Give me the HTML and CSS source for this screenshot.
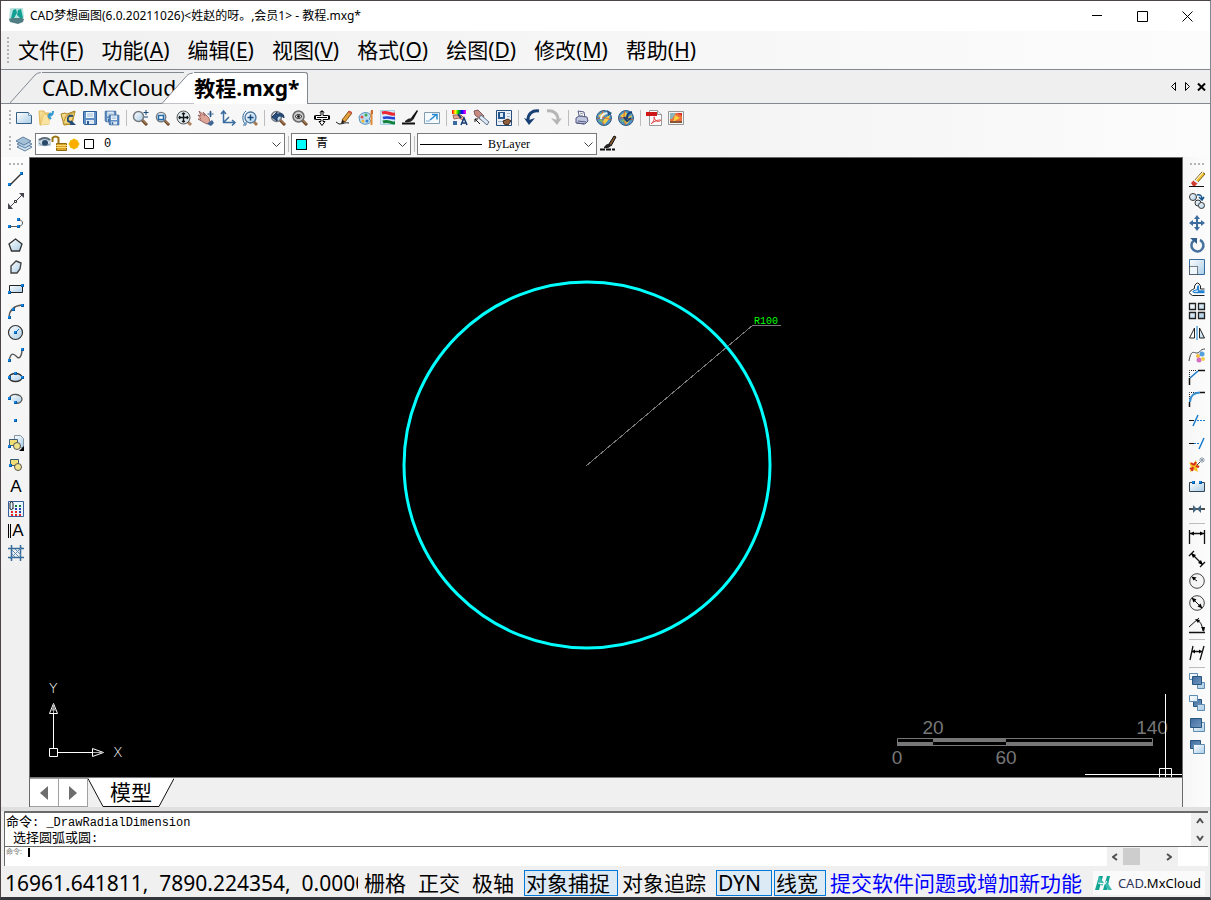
FILE: index.html
```html
<!DOCTYPE html>
<html lang="zh-CN">
<head>
<meta charset="utf-8">
<title>CAD梦想画图</title>
<link rel="stylesheet" href="styles.css">
</head>
<body>
<svg class="defs" aria-hidden="true">
  <defs>
    <linearGradient id="sky" x1="0" y1="0" x2="1" y2="1"><stop offset="0" stop-color="#fff"/><stop offset="1" stop-color="#a9cce6"/></linearGradient>
    <linearGradient id="gold" x1="0" y1="0" x2="1" y2="1"><stop offset="0" stop-color="#fbe9a6"/><stop offset="1" stop-color="#dca83c"/></linearGradient>
    <linearGradient id="deep" x1="0" y1="0" x2="1" y2="1"><stop offset="0" stop-color="#3f6c9f"/><stop offset="1" stop-color="#7197c0"/></linearGradient>
    <linearGradient id="spectrum"><stop offset="0" stop-color="#f00"/><stop offset=".25" stop-color="#ff0"/><stop offset=".45" stop-color="#0c0"/><stop offset=".7" stop-color="#00f"/><stop offset="1" stop-color="#f0f"/></linearGradient>
    <symbol id="lens" viewBox="0 0 16 16"><path d="M10 10l5 5" stroke="#6b4426" stroke-width="3"/><path d="M10.500 10l4 4" stroke="#d0a070"/><circle cx="6.500" cy="6.500" r="5" fill="url(#sky)" stroke="#747a80" stroke-width="1.500"/></symbol>
    <symbol id="disk" viewBox="0 0 16 16"><path d="M1.500 1.500h13v13h-12l-1-1z" fill="#5f8fc4" stroke="#2f5f98"/><path d="M4 2h8v6H4z" fill="#edf5fb"/><path d="M5 4h6M5 6h6" stroke="#9fbdd8"/><path d="M4 10h8v4H4z" fill="#dce8f2"/><path d="M5 11h2v3H5z" fill="#2f5f98"/></symbol>
    <symbol id="globe" viewBox="0 0 16 16"><circle cx="8" cy="8" r="7.500" fill="#4a91c4" stroke="#315f85"/><path d="M2 6l5-4 3 2-4 4zM9 14l4-5 1-4-5 3-3 5z" fill="#f2cc43"/><path d="M1 9c5-3 9-1 14 1M7 1c-2 5-1 10 1 14" fill="none" stroke="#d65b31"/><path d="M2 11l4-2 1 3" fill="#85b85a"/></symbol>
    <symbol id="dot" viewBox="0 0 3 3"><path d="M0 0h3v3H0z" fill="#005ba8"/><path d="M0 0h2v2H0z" fill="#1686e0"/></symbol>
  </defs>
</svg>

<div class="window">
  <header class="titlebar">
    <svg class="icon app-icon" viewBox="0 0 16 16"><path d="M1 0h13l1 9-2 3H0z" fill="#b8e3de"/><path d="M0 11l3-1h10l2 1-1 3-5 2-8-2z" fill="#4f7d83"/><path d="M4 2l3-1 1 4-3 5H2zM9 2l3-1 2 9h-3L8 7z" fill="#13a094"/></svg>
    <h1 class="title">CAD梦想画图(6.0.20211026)&lt;姓赵的呀。,会员1&gt; - 教程.mxg*</h1>
    <div class="window-buttons">
      <button class="window-button" aria-label="最小化"><svg viewBox="0 0 11 11"><path d="M0 4.500h10"/></svg></button>
      <button class="window-button" aria-label="最大化"><svg viewBox="0 0 11 11"><path d="M.5.500h10v10H.5z"/></svg></button>
      <button class="window-button" aria-label="关闭"><svg viewBox="0 0 11 11"><path d="M.5.500l10 10m0-10l-10 10"/></svg></button>
    </div>
  </header>

  <nav class="menubar">
    <span class="grip grip-tall"></span>
    <button class="menu">文件(<u>F</u>)</button>
    <button class="menu">功能(<u>A</u>)</button>
    <button class="menu">编辑(<u>E</u>)</button>
    <button class="menu">视图(<u>V</u>)</button>
    <button class="menu">格式(<u>O</u>)</button>
    <button class="menu">绘图(<u>D</u>)</button>
    <button class="menu">修改(<u>M</u>)</button>
    <button class="menu">帮助(<u>H</u>)</button>
  </nav>

  <div class="doc-tabs">
    <button class="doc-tab"><svg class="slope" viewBox="0 0 32 31"><path d="M0 31L25 3Q27 .5 32 .5V31z"/></svg><span class="doc-label">CAD.MxCloud</span></button>
    <button class="doc-tab active"><svg class="slope" viewBox="0 0 32 31"><path d="M0 31L25 3Q27 .5 32 .5V31z"/></svg><span class="doc-label">教程.mxg*</span></button>
    <div class="doc-nav">
      <button aria-label="上一个"><svg viewBox="0 0 9 9"><path d="M6.500.5v8l-4-4z"/></svg></button>
      <button aria-label="下一个"><svg viewBox="0 0 9 9"><path d="M2.500.5v8l4-4z"/></svg></button>
      <button aria-label="关闭图纸"><svg viewBox="0 0 9 9"><path d="M1 1.500l7 7m0-7l-7 7" stroke-width="2"/></svg></button>
    </div>
  </div>

  <div class="toolbar">
    <span class="grip"></span>
    <button class="tool" aria-label="新建"><svg viewBox="0 0 16 16"><path d="M.5 2.500h12l3 3v8H.5z" fill="url(#sky)" stroke="#355f87"/><path d="M12.500 2.500v3h3" fill="#fff" stroke="#6c9abc"/></svg></button>
    <button class="tool" aria-label="打开"><svg viewBox="0 0 16 16"><path d="M1 1h5l1 2h4v11l-9 1z" fill="url(#gold)" stroke="#dfb75a"/><path d="M3 15L6 5h3l3 9z" fill="#f9e3a0"/><path d="M15 1c0 4-2 5-5 5m0 0l3-3m-3 3l3 3" fill="none" stroke="#3399d2" stroke-width="2"/></svg></button>
    <button class="tool" aria-label="打开云图"><svg viewBox="0 0 16 16"><path d="M1 4l4-1 2 1 8-3-3 13-8 1z" fill="url(#gold)" stroke="#a6801d"/><path d="M3 14L6 6l9-4-4 12z" fill="#f5d779" stroke="#b99436"/><path d="M13 6c-4-1-6 1-5 5l4 2" fill="none" stroke="#254c77" stroke-width="2"/><path d="M11 10l5 5h-6z" fill="#254c77"/></svg></button>
    <button class="tool" aria-label="保存"><svg viewBox="0 0 16 16"><use href="#disk"/></svg></button>
    <button class="tool" aria-label="另存为"><svg viewBox="0 0 16 16"><use href="#disk" width="13" height="13"/><use href="#disk" x="4" y="4" width="12" height="12"/></svg></button>
    <span class="sep"></span>
    <button class="tool" aria-label="实时缩放"><svg viewBox="0 0 16 16"><use href="#lens" width="16" height="16"/><path d="M14 0v5M11.500 2.500h5M12 7h4" stroke="#164779"/></svg></button>
    <button class="tool" aria-label="窗口缩放"><svg viewBox="0 0 16 16"><use href="#lens" x="1" y="1" width="15" height="15"/><path d="M4.500 5.500h5v4h-5z" fill="#fff" stroke="#236ba8" stroke-width="1.500"/></svg></button>
    <button class="tool" aria-label="范围缩放"><svg viewBox="0 0 16 16"><path d="M12 12l3 3" stroke="#b08460" stroke-width="3"/><circle cx="7.500" cy="7.500" r="6.500" fill="#dce8ee" stroke="#555"/><path d="M7.500 3v9M3 7.500h9M6 4l1.500-1L9 4M6 11l1.500 1L9 11M4 6L3 7.500 4 9m7-3l1 1.500L11 9" fill="none" stroke="#111" stroke-width="1.300"/></svg></button>
    <button class="tool" aria-label="平移"><svg viewBox="0 0 16 16"><path d="M1 1l6 5-2-4 6 6 1 4-3 2-4-2-5-3 3 0-3-4 3 1z" fill="#dda498" stroke="#9f6a65"/><path d="M9 14l5-4 2 3-3 3z" fill="#3f6695"/><path d="M12.500 1v6M9.500 4h6" stroke="#2b5789"/><path d="M11 2.500l1.500-2 1.500 2M11 5.500l1.500 2 1.500-2" fill="#2b5789"/></svg></button>
    <button class="tool" aria-label="坐标系"><svg viewBox="0 0 16 16"><path d="M3.500 2v10.500H14M1 4l2.500-3L6 4M12 10l3 2.500-3 3M3.500 12.500L9 7" fill="none" stroke="#3a6c9f" stroke-width="1.500"/></svg></button>
    <button class="tool" aria-label="动态缩放"><svg viewBox="0 0 16 16"><path d="M4 1C0 4 0 10 3 14" fill="none" stroke="#306aa0"/><path d="M12 12l3 3" stroke="#a87a50" stroke-width="3"/><circle cx="8.500" cy="7.500" r="5.500" fill="url(#sky)" stroke="#48749c" stroke-width="1.300"/><path d="M8.500 4.500v6M5.500 7.500h6" stroke="#164d80" stroke-width="1.500"/><path d="M4 12v3H1" fill="none" stroke="#306aa0"/></svg></button>
    <span class="sep"></span>
    <button class="tool" aria-label="缩放上一个"><svg viewBox="0 0 16 16"><use href="#lens" width="16" height="16"/><path d="M14 8c0-5-4-6-7-3V2L2 7l5 4V8c2-3 5-2 7 0" fill="#294e7c" stroke="#193761"/></svg></button>
    <button class="tool" aria-label="放大对象"><svg viewBox="0 0 16 16"><use href="#lens" width="16" height="16"/><circle cx="6.500" cy="6.500" r="5.500" fill="#ccc" stroke="#6b6b6b" stroke-width="1.500"/><path d="M3 6.500q3.500-4 7 0-3.500 4-7 0" fill="#eee" stroke="#222"/><circle cx="6.500" cy="6.500" r="1.300"/></svg></button>
    <button class="tool" aria-label="移动视图"><svg viewBox="0 0 16 16"><path d="M7 1.500h2v4h5.500v4H9v2h2l-3 4-3-4h2v-2H1.500v-4H7zM.5 5.500v4M15.500 5.500v4" fill="#fff" stroke="#000"/><path d="M6 2.500l2-2 2 2M3 7.500h10" fill="none" stroke="#000"/></svg></button>
    <button class="tool" aria-label="草图"><svg viewBox="0 0 16 16"><path d="M6 10L13 1l3 2-7 9z" fill="#e4a13a" stroke="#825017"/><path d="M12 2l3 2 1-2-2-1z" fill="#d9544d"/><path d="M6 10l3 2-4 2z" fill="#201c16"/><path d="M0 12l3 2c5 0 6-2 10-1" fill="none" stroke="#222"/></svg></button>
    <button class="tool" aria-label="颜色"><svg viewBox="0 0 16 16"><path d="M1 7c1-4 7-6 11-3l1 2-2 3 2 2c-1 3-7 5-11 1z" fill="#b9dcf1" stroke="#5994bd"/><circle cx="4" cy="7" r="1.500" fill="#e64b4b"/><circle cx="8" cy="5" r="1.500" fill="#3da84a"/><circle cx="5" cy="11" r="1.500" fill="#f4b430"/><circle cx="9" cy="11" r="1.500" fill="#3481cf"/><path d="M13.500 1v14" stroke="#e28a36" stroke-width="2"/><path d="M13 0h2v4h-2z" fill="#c66e31"/></svg></button>
    <button class="tool" aria-label="图层属性"><svg viewBox="0 0 16 16"><path d="M.5.500h14v14H.5z" fill="#d8edf8" stroke="#a9cfe6"/><path d="M2 3c6-2 7 2 13 1" fill="none" stroke="#ed2835" stroke-width="3"/><path d="M3 8c5-2 7 1 12 0" fill="none" stroke="#243fd4" stroke-width="2.500"/><path d="M3 12c5-2 7 1 12 1" fill="none" stroke="#10823c" stroke-width="3"/></svg></button>
    <button class="tool" aria-label="格式刷"><svg viewBox="0 0 16 16"><path d="M9 8l6-8 1 1-5 9z" fill="#111"/><path d="M3 11q3-3 7-3l1 2q-3 3-8 2z" fill="#222"/><path d="M0 13.500h13" stroke="#111" stroke-width="2"/></svg></button>
    <button class="tool" aria-label="全屏"><svg viewBox="0 0 16 16"><path d="M.5 2.500h15v11H.5z" fill="#f4fafe" stroke="#829db0"/><path d="M6 10l6-5M8 4.500h5v5" fill="none" stroke="#278ad0" stroke-width="1.500"/><path d="M2 10h4v2H2z" fill="#b6d3e5"/></svg></button>
    <span class="sep"></span>
    <button class="tool" aria-label="文字样式"><svg viewBox="0 0 16 16"><path d="M0 0h14v4H0z" fill="url(#spectrum)"/><path d="M1 5l8 0 4 4-2 1-4-2-5 1z" fill="#e4ab96" stroke="#9b6358"/><path d="M1 11h4v4H1z" fill="#3a6ba2"/><path d="M6 4l3 4" stroke="#18396b" stroke-width="2"/><path d="M9 15l3-7 3 7m-5-2h4" fill="none" stroke="#173c71" stroke-width="1.500"/></svg></button>
    <button class="tool" aria-label="选择"><svg viewBox="0 0 16 16"><path d="M0 1l4-1 6 6-3 4-6-5z" fill="#c88a80" stroke="#7d5958"/><path d="M7 5l8 7-2 3-8-7z" fill="#dce8f2" stroke="#61738a"/><path d="M1 9l5 5M1 12V9h3" fill="none" stroke="#111"/></svg></button>
    <button class="tool" aria-label="块编辑"><svg viewBox="0 0 16 16"><path d="M.5.500h15v15H.5z" fill="#e9eff4" stroke="#264f7e"/><path d="M2 2h7v7H2z" fill="#24568d"/><path d="M4 3h3v4H4z" fill="#d6e7f5"/><path d="M11 3h3v1h-3zm0 3h3v1h-3zM2 11h7v1H2z" fill="#9bb7d0"/><path d="M7 11l5-2 3 2-3 4-4-1z" fill="#91613d" stroke="#402617"/></svg></button>
    <span class="sep"></span>
    <button class="tool" aria-label="撤销"><svg viewBox="0 0 16 16"><path d="M15 1C8 0 4 4 4 10" fill="none" stroke="#173f73" stroke-width="3"/><path d="M0 8l5 7 6-7-6 2z" fill="#173f73"/></svg></button>
    <button class="tool" aria-label="重做"><svg viewBox="0 0 16 16"><path d="M1 1c7-1 11 3 11 9" fill="none" stroke="#b5b5b5" stroke-width="3"/><path d="M16 8l-5 7-6-7 6 2z" fill="#b5b5b5"/></svg></button>
    <span class="sep"></span>
    <button class="tool" aria-label="打印"><svg viewBox="0 0 16 16"><path d="M4 1l6 1 1 6-5 1z" fill="#fff" stroke="#525880"/><path d="M2 8l3-2 8 1 1 4-3 3-9-1z" fill="#bfc6dd" stroke="#525880"/><path d="M4 11l8 1M3 13l7 1" stroke="#525880"/><path d="M6 3l3 1M6 5l3 1" stroke="#9298ae"/></svg></button>
    <button class="tool" aria-label="网络上传"><svg viewBox="0 0 16 16"><use href="#globe" width="16" height="16"/><path d="M5 9c0-5 3-6 8-6" fill="none" stroke="#e9f7ff" stroke-width="2"/><path d="M11 0l5 3-4 3z" fill="#245788"/></svg></button>
    <button class="tool" aria-label="网络下载"><svg viewBox="0 0 16 16"><use href="#globe" width="16" height="16"/><path d="M14 2C9 3 9 6 9 9m-3-2l3 4 4-3" fill="none" stroke="#163e72" stroke-width="2"/></svg></button>
    <span class="sep"></span>
    <button class="tool" aria-label="输出PDF"><svg viewBox="0 0 16 16"><path d="M3.500.5h8l4 4v11h-12z" fill="#fff" stroke="#999"/><path d="M11.500.5v4h4" fill="#eee" stroke="#999"/><path d="M0 2h11v4H0z" fill="#cf1717"/><path d="M5 14c4-4 4-8 3-7s3 6 6 4-4-1-8 2" fill="none" stroke="#e33b3b"/></svg></button>
    <button class="tool" aria-label="输出图片"><svg viewBox="0 0 16 16"><path d="M.5 1.500h15v13H.5z" fill="#f5f5f5" stroke="#969696"/><path d="M2 3h12v10H2z" fill="#ed6d3b"/><path d="M2 3h6L4 9H2z" fill="#89b5bd"/><path d="M7 5l5 3-7 4z" fill="#f9cf40"/><path d="M9 3h5v3z" fill="#da352d"/><path d="M2 11h12v2H2z" fill="#875538"/></svg></button>
  </div>

  <div class="toolbar properties">
    <span class="grip"></span>
    <button class="tool" aria-label="图层"><svg viewBox="0 0 16 16"><path d="M1 11l7-4 8 4-7 4z" fill="#d3e5f2" stroke="#5d7fa0"/><path d="M1 8l7-4 8 4-7 4z" fill="#b7d1e6" stroke="#5d7fa0"/><path d="M0 5l7-4 8 4-7 4z" fill="#a4c1d8" stroke="#5d7fa0"/></svg></button>
    <div class="picker picker-layer">
      <select aria-label="当前图层"><option>0</option></select>
      <svg class="picker-icons" viewBox="0 0 60 18"><path d="M0 4q7-4 13 0v7H0z" fill="#cbdbe6"/><path d="M1 5q6-4 11 0" fill="none" stroke="#5d6b78" stroke-width="2"/><circle cx="7" cy="8" r="3" fill="#274a68"/><path d="M1 8q5 5 11 1" fill="none" stroke="#758b9d"/><path d="M14.500 7V3q3-3 6 0v6" fill="none" stroke="#9a7411" stroke-width="2"/><path d="M18.500 8.500h10v7h-10z" fill="#dca324" stroke="#8f6914"/><path d="M18 10.500h11M18 12.500h11" stroke="#f6d66e"/><path d="M36 3v12M30 9h12M32 5l8 8m0-8l-8 8" stroke="#f7d45a"/><circle cx="36" cy="9" r="4.500" fill="#ffae00" stroke="#eac000"/><path d="M46.500 4.500h9v9h-9z" fill="#fff" stroke="#000"/></svg>
      <svg class="chevron" viewBox="0 0 9 6"><path d="M.5.500l4 4 4-4"/></svg>
    </div>
    <span class="sep"></span>
    <div class="picker picker-color">
      <select aria-label="颜色"><option>青</option></select>
      <span class="swatch"></span>
      <svg class="chevron" viewBox="0 0 9 6"><path d="M.5.500l4 4 4-4"/></svg>
    </div>
    <span class="sep"></span>
    <div class="picker picker-line">
      <select aria-label="线型"><option>ByLayer</option></select>
      <span class="line-sample"></span>
      <svg class="chevron" viewBox="0 0 9 6"><path d="M.5.500l4 4 4-4"/></svg>
    </div>
    <button class="tool" aria-label="线型管理"><svg viewBox="0 0 16 16"><path d="M9 8l5-8 2 1-5 9z" fill="#84592e" stroke="#111"/><path d="M4 11q3-4 6-3l1 2q-3 3-7 2z" fill="#222"/><path d="M0 13.500h15" stroke="#111" stroke-width="2" stroke-dasharray="5 1"/></svg></button>
  </div>

  <main class="workspace">
    <div class="side side-left">
      <span class="grip grip-flat"></span>
      <button class="tool" aria-label="直线"><svg viewBox="0 0 16 16"><path d="M2 14L14 2" stroke="#333" stroke-width="1.500"/><use href="#dot" x="0" y="12" width="3" height="3"/><use href="#dot" x="12" y="1" width="3" height="3"/></svg></button>
      <button class="tool" aria-label="构造线"><svg viewBox="0 0 16 16"><path d="M1 15L15 1" fill="none" stroke="#454550"/><path d="M0 10v6h5zM16 5V0h-5z" fill="#454550"/><path d="M6.500 7.500h2v2h-2z" fill="#fff" stroke="#333"/></svg></button>
      <button class="tool" aria-label="多段线"><svg viewBox="0 0 16 16"><path d="M1 11.500h9c6 0 6-7 0-7" fill="none" stroke="#555"/><use href="#dot" x="0" y="10" width="3" height="3"/><use href="#dot" x="9" y="10" width="3" height="3"/><use href="#dot" x="9" y="3" width="3" height="3"/></svg></button>
      <button class="tool" aria-label="正多边形"><svg viewBox="0 0 16 16"><path d="M7.500 2l6.500 5-2.500 7h-8L1 7z" fill="url(#sky)" stroke="#333" stroke-width="1.300"/></svg></button>
      <button class="tool" aria-label="多边形"><svg viewBox="0 0 16 16"><path d="M8 2l5 2-1 6-3 4H3V7z" fill="url(#sky)" stroke="#444" stroke-width="1.400"/></svg></button>
      <button class="tool" aria-label="矩形"><svg viewBox="0 0 16 16"><path d="M1.500 4.500h13v7h-13z" fill="url(#sky)" stroke="#222"/><use href="#dot" x="0" y="10" width="3" height="3"/><use href="#dot" x="13" y="3" width="3" height="3"/></svg></button>
      <button class="tool" aria-label="圆弧"><svg viewBox="0 0 16 16"><path d="M1 14Q2 3 14 2" fill="none" stroke="#555" stroke-width="1.400"/><use href="#dot" x="0" y="13" width="3" height="3"/><use href="#dot" x="4" y="5" width="3" height="3"/><use href="#dot" x="13" y="1" width="3" height="3"/></svg></button>
      <button class="tool" aria-label="圆"><svg viewBox="0 0 16 16"><circle cx="7.500" cy="7.500" r="7" fill="url(#sky)" stroke="#333" stroke-width="1.200"/><path d="M7 8l4-4" stroke="#0874c9"/><use href="#dot" x="6" y="6" width="3" height="3"/></svg></button>
      <button class="tool" aria-label="样条曲线"><svg viewBox="0 0 16 16"><path d="M1 14C3 3 7 8 9 10s5 0 5-8" fill="none" stroke="#555" stroke-width="1.400"/><use href="#dot" x="0" y="12" width="3" height="3"/><use href="#dot" x="13" y="1" width="3" height="3"/></svg></button>
      <button class="tool" aria-label="椭圆"><svg viewBox="0 0 16 16"><ellipse cx="7.500" cy="8.500" rx="6.500" ry="4" fill="url(#sky)" stroke="#333" stroke-width="1.300"/><use href="#dot" x="0" y="7" width="3" height="3"/><use href="#dot" x="6" y="3" width="3" height="3"/><use href="#dot" x="13" y="7" width="3" height="3"/></svg></button>
      <button class="tool" aria-label="椭圆弧"><svg viewBox="0 0 16 16"><path d="M1 8c2-7 13-5 13 0 0 3-3 5-7 4" fill="url(#sky)" stroke="#555" stroke-width="1.300"/><use href="#dot" x="0" y="6" width="3" height="3"/><use href="#dot" x="6" y="10" width="3" height="3"/></svg></button>
      <button class="tool" aria-label="点"><svg viewBox="0 0 16 16"><use href="#dot" x="6" y="6" width="3" height="3"/></svg></button>
      <button class="tool" aria-label="插入块"><svg viewBox="0 0 16 16"><path d="M6.500.5h6l3 3v9h-9z" fill="url(#sky)" stroke="#8195a5"/><path d="M1.500 4.500h8v6h-8z" fill="#f1df75" stroke="#415e78"/><circle cx="9" cy="11" r="3.500" fill="#eee28b" stroke="#555"/><use href="#dot" x="0" y="10" width="3" height="3"/><path d="M16 11v5h-5z"/></svg></button>
      <button class="tool" aria-label="创建块"><svg viewBox="0 0 16 16"><path d="M2.500 2.500h8v6h-8z" fill="#f1df75" stroke="#315977"/><circle cx="10" cy="10" r="3.500" fill="#eee28b" stroke="#555"/><use href="#dot" x="1" y="7" width="3" height="3"/></svg></button>
      <button class="tool letter" aria-label="单行文字">A</button>
      <button class="tool" aria-label="填充"><svg viewBox="0 0 16 16"><path d="M.5.500h15v15H.5z" fill="#e9f6ff" stroke="#385f9b"/><path d="M2 8V2q2-3 3 0v6M2 8q2 2 3-1" fill="none" stroke="#222"/><path d="M7 5h2m2 0h2" stroke="#157a3d" stroke-width="2"/><path d="M7 8h2m2 0h2M11 11h2" stroke="#263ea7" stroke-width="2"/><path d="M3 11h2m2 0h2M3 14h2m2 0h2m2 0h2" stroke="#e22" stroke-width="2"/></svg></button>
      <button class="tool letter" aria-label="多行文字"><span class="barred">A</span></button>
      <button class="tool" aria-label="图案填充"><svg viewBox="0 0 16 16"><path d="M0 3.500h16M0 12.500h16M3.500 0v16M12.500 0v16" stroke="#376b9c" stroke-width="1.500"/><path d="M4 5l7 7M7 4l6 6M4 9l3 3M2 14L14 2" stroke="#5b8db8"/></svg></button>
    </div>

    <section class="viewer">
      <svg class="drawing" role="img" aria-label="半径标注图纸">
        <g transform="translate(557 307)">
          <path d="M-1 1L166-140H194" class="leader"/>
          <circle class="arc" r="183"/>
          <text class="radius" x="167" y="-141">R100</text>
        </g>
        <svg x="0" y="100%" overflow="visible">
          <path class="ucs" d="M19.500-28.500h8v8h-8zM23.500-28.500v-35M27.500-24.500h35M23.500-73.500l-4 10h8zM73.500-24.500l-11-4v8z"/>
          <path class="ucs thin" d="M23.500-73v9M22-66l1.500-5 1.500 5M73-24.500h-10"/>
          <text class="axis" x="19" y="-84">Y</text>
          <text class="axis" x="83" y="-20">X</text>
        </svg>
        <svg x="100%" y="100%" overflow="visible">
          <path class="scale-line" d="M-284.500-38.500h255v7h-255z"/>
          <path class="scale-fill" d="M-285-35h36v4h-36zM-249-39h73v4h-73zM-176-35h147v4h-147z"/>
          <g class="scale-text">
            <text x="-249" y="-43">20</text><text x="-30" y="-43">140</text>
            <text x="-285" y="-13">0</text><text x="-176" y="-13">60</text>
          </g>
          <path class="ucs" d="M-16.500-83v83M-97-2.500h97M-22.500 0v-8.500h12V0"/>
        </svg>
      </svg>
      <div class="sheets">
        <button class="sheet-nav" aria-label="上一布局"><svg viewBox="0 0 8 14"><path d="M8 0v14L0 7z"/></svg></button>
        <button class="sheet-nav" aria-label="下一布局"><svg viewBox="0 0 8 14"><path d="M0 0v14l8-7z"/></svg></button>
        <button class="sheet"><svg viewBox="0 0 86 29"><path d="M0 .5l15 28h56l15-28" fill="#fff" stroke="#111"/></svg><span>模型</span></button>
      </div>
    </section>

    <div class="side side-right">
      <span class="grip grip-flat"></span>
      <button class="tool" aria-label="删除"><svg viewBox="0 0 16 16"><path d="M0 15.500h15" stroke="#111"/><path d="M5 10l8-9 3 2-8 9z" fill="#f3c530" stroke="#755b1a"/><path d="M7 9l7-8" stroke="#fff"/><path d="M2 12l3-3 4 3-3 3H4z" fill="#d0392e"/><path d="M5 9l4 3" stroke="#e9eef2" stroke-width="2"/></svg></button>
      <button class="tool" aria-label="复制"><svg viewBox="0 0 16 16"><g fill="url(#sky)" stroke="#333"><circle cx="4" cy="4" r="3.500"/><circle cx="9" cy="10" r="3"/><circle cx="12.500" cy="12.500" r="3"/></g><path d="M8 2q5-1 5 4m-3-2l3 3 2-3" fill="none" stroke="#16568d" stroke-width="1.500"/></svg></button>
      <button class="tool" aria-label="移动"><svg viewBox="0 0 16 16"><path d="M8 2v12M2 8h12" stroke="#3d6d9f" stroke-width="2"/><path d="M8 0l3 4H5zM8 16l3-4H5zM0 8l4-3v6zM16 8l-4-3v6z" fill="#3d6d9f"/></svg></button>
      <button class="tool" aria-label="旋转"><svg viewBox="0 0 16 16"><path d="M5 3.500A6 6 0 1 0 11 3" fill="none" stroke="#44719f" stroke-width="2.500"/><path d="M1 1h7v6z" fill="#315e8c"/></svg></button>
      <button class="tool" aria-label="缩放"><svg viewBox="0 0 16 16"><path d="M.5.500h15v15H.5z" fill="url(#sky)" stroke="#346ca0"/><path d="M.5 7.500h8v8h-8z" fill="#eef7fd" stroke="#111" stroke-dasharray="1 1"/></svg></button>
      <button class="tool" aria-label="偏移"><svg viewBox="0 0 16 16"><path d="M15.500 14.500h-12q-6-3 0-6l2-1V5q3-6 6 0v3h4" fill="#fff" stroke="#222"/><path d="M15.500 11.500h-10q-3-1 0-2l3-1V6q1-2 1 0v4h6" fill="none" stroke="#2683d2" stroke-width="1.300"/></svg></button>
      <button class="tool" aria-label="阵列"><svg viewBox="0 0 16 16"><path d="M.5.500h6v6h-6zM9.500.5h6v6h-6zM.5 9.500h6v6h-6zM9.500 9.500h6v6h-6z" fill="url(#sky)" stroke="#222" stroke-width="1.300"/></svg></button>
      <button class="tool" aria-label="镜像"><svg viewBox="0 0 16 16"><path d="M5.500 3v10h-5z" fill="#fff" stroke="#222"/><path d="M10.500 3v10h5z" fill="url(#sky)" stroke="#222"/><path d="M8 1v14" stroke="#0879cc"/></svg></button>
      <button class="tool" aria-label="分解曲线"><svg viewBox="0 0 16 16"><path d="M0 14C2 2 5 6 8 6s3-4 8-4" fill="none" stroke="#444"/><circle cx="9" cy="9" r="2" fill="#f4ba3b"/><circle cx="13" cy="7" r="2.500" fill="#559fda"/><circle cx="10" cy="13" r="2.500" fill="#d46dc3"/><circle cx="14" cy="12" r="2" fill="#edcf4d"/></svg></button>
      <button class="tool" aria-label="倒角"><svg viewBox="0 0 16 16"><path d="M.5 16V9M9 1.500h7" stroke="#111" stroke-width="1.500"/><path d="M.5 8V1.500H8" fill="none" stroke="#222" stroke-dasharray="1 1"/><path d="M1 9l8-7" stroke="#177bd0" stroke-width="1.500"/></svg></button>
      <button class="tool" aria-label="圆角"><svg viewBox="0 0 16 16"><path d="M.5 16v-5M11 1.500h5" stroke="#111" stroke-width="1.500"/><path d="M.5 8V1.500H8" fill="none" stroke="#222" stroke-dasharray="1 1"/><path d="M1 11q0-9 10-9.500" fill="none" stroke="#368dce" stroke-width="2"/></svg></button>
      <button class="tool" aria-label="修剪"><svg viewBox="0 0 16 16"><path d="M0 7.500h5" stroke="#111"/><path d="M4 13L9 2" stroke="#177bd0" stroke-width="1.500"/><path d="M8 7.500h8" stroke="#177bd0" stroke-dasharray="2 1"/></svg></button>
      <button class="tool" aria-label="延伸"><svg viewBox="0 0 16 16"><path d="M0 8.500h5" stroke="#111"/><path d="M10 14l5-11" stroke="#177bd0" stroke-width="1.500"/><path d="M5 8.500h6" stroke="#177bd0" stroke-dasharray="2 1"/></svg></button>
      <button class="tool" aria-label="分解"><svg viewBox="0 0 16 16"><path d="M0 5l4 2 3-4 1 5 3 1-3 2 1 4-4-2-4 2 1-5z" fill="#f5bf24"/><path d="M2 6l3 2M7 5L5 8m5 2l-3-1M3 14l1-4M1 11l3 2" stroke="#d62d20" stroke-width="2"/><path d="M8 8l5-5" stroke="#444"/><path d="M13 0v6m-3-3h6m-5-2l4 4m0-4l-4 4" stroke="#8e9caa"/></svg></button>
      <button class="tool" aria-label="打断"><svg viewBox="0 0 16 16"><path d="M4 3.500H.5v9h15v-9H12" fill="url(#sky)" stroke="#345"/><use href="#dot" x="3" y="2" width="3" height="3"/><use href="#dot" x="10" y="2" width="3" height="3"/></svg></button>
      <button class="tool" aria-label="合并"><svg viewBox="0 0 16 16"><path d="M0 8h16" stroke="#111" stroke-width="1.500"/><path d="M8 8L4 4v8zM8 8l4-4v8z" fill="#41647f"/></svg></button>
      <span class="sep"></span>
      <button class="tool" aria-label="线性标注"><svg viewBox="0 0 16 16"><path d="M.5 1v14M15.500 1v14M1 4.500h14" stroke="#111" stroke-width="1.300"/><path d="M1 4.500l4-2v4zM15 4.500l-4-2v4z"/></svg></button>
      <button class="tool" aria-label="对齐标注"><svg viewBox="0 0 16 16"><path d="M0 5l5-5M11 16l5-5M3 3l10 10" stroke="#111" stroke-width="1.300"/><path d="M2 2l5 2-3 3zM14 14l-5-2 3-3z"/></svg></button>
      <button class="tool" aria-label="半径标注"><svg viewBox="0 0 16 16"><circle cx="8" cy="8" r="7.300" fill="#f5f5f5" stroke="#444"/><path d="M8 8L4 5" stroke="#111"/><path d="M2.500 3.500l5 1-3 3z"/></svg></button>
      <button class="tool" aria-label="直径标注"><svg viewBox="0 0 16 16"><circle cx="8" cy="8" r="7.300" fill="#f5f5f5" stroke="#444"/><path d="M3 3l10 10" stroke="#111"/><path d="M2.500 2.500l5 2-3 3zM13.500 13.500l-5-2 3-3z"/></svg></button>
      <button class="tool" aria-label="角度标注"><svg viewBox="0 0 16 16"><path d="M0 15.500h16" stroke="#111" stroke-width="1.500"/><path d="M0 10L10 1M8 3q5 2 6 11" fill="none" stroke="#111"/><path d="M6 2l5 1-2 3zM12 10l4 0-1 5z"/></svg></button>
      <span class="sep"></span>
      <button class="tool" aria-label="编辑标注"><svg viewBox="0 0 16 16"><path d="M1 15L4 1M11 15l4-14M3 6.500h10" stroke="#111" stroke-width="1.300"/><path d="M3 6.500l3-2v4zM13 6.500l-3-2v4z"/></svg></button>
      <span class="sep"></span>
      <button class="tool" aria-label="置于最前"><svg viewBox="0 0 16 16"><path d="M.5.500h8v6h-8zM8.500 9.500h7v6h-7z" fill="url(#sky)" stroke="#5e8bae"/><path d="M3.500 3.500h9v8h-9z" fill="url(#deep)" stroke="#275582"/></svg></button>
      <button class="tool" aria-label="置于最后"><svg viewBox="0 0 16 16"><path d="M4.500 4.500h8v7h-8z" fill="url(#deep)" stroke="#275582"/><path d="M.5.500h8v6h-8zM8.500 9.500h7v6h-7z" fill="url(#sky)" stroke="#5e8bae"/></svg></button>
      <button class="tool" aria-label="前置对象"><svg viewBox="0 0 16 16"><path d="M4.500 5.500h11v9h-11z" fill="url(#sky)" stroke="#5e8bae"/><path d="M1.500 1.500h11v9h-11z" fill="url(#deep)" stroke="#275582"/></svg></button>
      <button class="tool" aria-label="后置对象"><svg viewBox="0 0 16 16"><path d="M1.500 1.500h10v8h-10z" fill="url(#deep)" stroke="#275582"/><path d="M4.500 5.500h11v9h-11z" fill="url(#sky)" stroke="#5e8bae"/></svg></button>
    </div>
  </main>

  <section class="command">
    <div class="history">
      <div class="history-text">
        <p>命令<span class="latin">: _DrawRadialDimension</span></p>
        <p class="indent">选择圆弧或圆<span class="latin">:</span></p>
      </div>
      <div class="vscroll">
        <button aria-label="向上滚动"><svg viewBox="0 0 8 6"><path d="M1 5l3-4 3 4"/></svg></button>
        <button aria-label="向下滚动"><svg viewBox="0 0 8 6"><path d="M1 1l3 4 3-4"/></svg></button>
      </div>
    </div>
    <div class="prompt">
      <label for="command-input">命令:</label>
      <span class="caret"></span>
      <input id="command-input" type="text">
      <div class="hscroll">
        <button aria-label="向左滚动"><svg viewBox="0 0 6 8"><path d="M5 1L1 4l4 3"/></svg></button>
        <span class="thumb"></span>
        <button aria-label="向右滚动"><svg viewBox="0 0 6 8"><path d="M1 1l4 3-4 3"/></svg></button>
      </div>
    </div>
  </section>

  <footer class="status">
    <output class="coords">16961.641811,&nbsp; 7890.224354,&nbsp; 0.0000</output>
    <button class="toggle">栅格</button>
    <button class="toggle">正交</button>
    <button class="toggle">极轴</button>
    <button class="toggle on">对象捕捉</button>
    <button class="toggle">对象追踪</button>
    <button class="toggle toggle-wide on">DYN</button>
    <button class="toggle on">线宽</button>
    <a class="feedback" href="#">提交软件问题或增加新功能</a>
    <div class="brand">
      <svg viewBox="0 0 18 16"><path d="M4 1h4L4 15H0zM12 1h3l-3 14H8z" fill="#12a594"/><path d="M4 1l5 7-2 3-4-6zM12 7l5 8h-4l-3-5z" fill="#3bbcb0"/><path d="M3 8l7 1 2-3" fill="none" stroke="#fff"/></svg>
      <span><span class="brand-cad">CAD</span>.MxCloud</span>
    </div>
  </footer>
</div>
</body>
</html>
```
FILE: styles.css
```css
* { box-sizing: border-box; }

body {
  margin: 0;
  font-family: "Noto Sans", "Noto Sans CJK SC", sans-serif;
  color: #000;
  background: #f0f0f0;
}

button {
  margin: 0;
  padding: 0;
  border: 0;
  background: none;
  font: inherit;
  color: inherit;
}

h1, p { margin: 0; font-weight: normal; }
svg { display: block; flex: none; }
.defs { position: absolute; width: 0; height: 0; }

.window {
  display: flex;
  flex-direction: column;
  height: 100vh;
  min-height: 860px;
  border: 1px solid #4b4545;
  border-right-color: #828790;
  border-bottom: 3px solid #34363a;
  overflow: hidden;
}

/* Title bar */
.titlebar {
  display: flex;
  flex: none;
  align-items: center;
  height: 30px;
  padding-left: 8px;
  background: #fff;
}
.app-icon { width: 16px; height: 16px; }
.title { flex: 1; padding-left: 5px; font-size: 12px; line-height: 20px; white-space: nowrap; }
.window-buttons { display: flex; }
.window-button { display: grid; place-items: center; width: 45px; height: 28px; }
.window-button svg { width: 11px; height: 11px; fill: none; stroke: #000; }

/* Menus */
.menubar {
  display: flex;
  flex: none;
  align-items: center;
  height: 39px;
  padding-left: 6px;
  border-bottom: 1px solid #828790;
  background: linear-gradient(90deg, #f0f0f0, #fcfcfc);
}
.menu { padding: 0 9px; font-size: 21px; line-height: 30px; white-space: nowrap; }
.menu u { text-decoration-thickness: 1px; text-underline-offset: 2px; }
.grip {
  flex: none;
  width: 2px;
  height: 16px;
  margin-right: 2px;
  background: repeating-linear-gradient(#b4b4b4 0 2px, transparent 2px 4px);
}
.grip-tall { height: 26px; margin-right: 0; }
.grip-flat {
  width: 14px;
  height: 2px;
  margin: 6px 0 3px;
  background: repeating-linear-gradient(90deg, #b4b4b4 0 2px, transparent 2px 4px);
}

/* Document tabs */
.doc-tabs {
  display: flex;
  flex: none;
  align-items: flex-end;
  height: 34px;
  padding-left: 9px;
  border-bottom: 1px solid #828790;
  background: #efefef;
}
.doc-tab { display: flex; height: 31px; font-size: 21px; line-height: 31px; }
.slope { width: 32px; height: 31px; fill: #efefef; }
.slope path { stroke: #828790; stroke-dasharray: 44 100; }
.doc-label { height: 31px; padding-right: 8px; border-top: 1px solid #828790; white-space: nowrap; }
.doc-tab.active { z-index: 1; height: 32px; margin: 0 0 -1px -22px; font-weight: bold; }
.active .slope { height: 32px; fill: #fff; }
.active .doc-label { height: 32px; border-right: 1px solid #828790; border-radius: 0 3px 0 0; background: #fff; }
.doc-nav { display: flex; gap: 5px; margin: 0 4px 12px auto; }
.doc-nav svg { width: 9px; height: 9px; fill: none; stroke: #000; }

/* Toolbars */
.toolbar {
  display: flex;
  flex: none;
  align-items: center;
  height: 28px;
  padding-left: 8px;
  background: linear-gradient(90deg, #f8f8f8, #f4f4f4 60%, #fcfcfc);
}
.properties { height: 25px; padding-bottom: 1px; }
.tool { display: grid; flex: none; place-items: center; width: 22px; height: 22px; }
.tool svg { width: 16px; height: 16px; overflow: visible; }
.letter { font-family: "Liberation Sans", sans-serif; font-size: 17px; line-height: 22px; }
.barred { padding-left: 1px; border-left: 3px double #000; line-height: 14px; }
.sep {
  flex: none;
  width: 6px;
  height: 16px;
  background: linear-gradient(#bdbdbd, #bdbdbd) center / 1px 100% no-repeat;
}
.picker { position: relative; height: 22px; }
.picker select {
  display: block;
  width: 100%;
  height: 100%;
  border: 1px solid #7a7a7a;
  border-radius: 0;
  background: #fff;
  color: #000;
  font-family: "Liberation Mono", "Noto Sans CJK SC", monospace;
  font-size: 12px;
  appearance: none;
}
.picker-layer { width: 250px; }
.picker-layer select { padding-left: 68px; }
.picker-color { width: 120px; }
.picker-color select { padding-left: 24px; }
.picker-line { width: 180px; }
.picker-line select { padding-left: 70px; font-family: "Liberation Serif", serif; }
.picker-icons { position: absolute; top: 2px; left: 3px; width: 60px; height: 18px; pointer-events: none; }
.swatch { position: absolute; top: 6px; left: 5px; width: 11px; height: 11px; border: 1px solid #000; background: #0ff; pointer-events: none; }
.line-sample { position: absolute; top: 11px; left: 3px; width: 62px; height: 1px; background: #000; pointer-events: none; }
.chevron { position: absolute; top: 9px; right: 4px; width: 9px; height: 6px; fill: none; stroke: #444; pointer-events: none; }

/* Workspace */
.workspace { display: flex; flex: 1; min-height: 0; }
.side { display: flex; flex: none; flex-direction: column; align-items: center; background: #f0f0f0; }
.side-left { width: 28px; padding-left: 2px; background: linear-gradient(#fcfcfc, #f1f1f1) left top / 100% 410px no-repeat #f0f0f0; }
.side-right { width: 27px; background: linear-gradient(90deg, #f6f6f6, #fcfcfc); }
.side .sep {
  width: 16px;
  height: 6px;
  background: linear-gradient(#bdbdbd, #bdbdbd) center / 100% 1px no-repeat;
}
.viewer { display: flex; flex: 1; flex-direction: column; min-width: 0; border: 1px solid #6a6a6a; border-width: 1px 1px 0; }
.drawing { flex: 1; width: 100%; min-height: 0; background: #000; overflow: hidden; }
.arc { fill: none; stroke: #0ff; stroke-width: 3; }
.leader { fill: none; stroke: #777; shape-rendering: crispEdges; }
.radius { fill: #0f0; font: 10px "Liberation Mono", monospace; }
.ucs { fill: none; stroke: #fff; }
.thin { stroke: #aaa; }
.axis { fill: #fff; font: 14px "DejaVu Sans", sans-serif; font-weight: 200; }
.scale-line { fill: none; stroke: #777; }
.scale-fill { fill: #777; }
.scale-text { fill: #777; font: 19px "Liberation Sans", sans-serif; text-anchor: middle; }

.sheets {
  display: flex;
  flex: none;
  height: 30px;
  border-top: 1px solid #777;
  background: #f0f0f0;
}
.sheet-nav { display: grid; place-items: center; width: 29px; height: 29px; border: 1px solid #a0a0a0; border-left-width: 0; background: #fff; }
.sheet-nav svg { width: 8px; height: 14px; fill: #6d6d6d; }
.sheet { display: grid; width: 86px; height: 29px; font-size: 21px; line-height: 29px; }
.sheet svg, .sheet span { grid-area: 1 / 1; }
.sheet svg { width: 86px; height: 29px; }
.sheet span { z-index: 1; }

/* Command line */
.command {
  flex: none;
  padding: 0 2px 2px 3px;
  border-top: 4px solid #e0e0e0;
}
.history { display: flex; height: 36px; border: 1px solid #6a6a6a; border-top-width: 2px; border-right: 0; background: #fff; }
.history-text { flex: 1; padding-left: 1px; font-family: "Noto Sans CJK SC", sans-serif; font-size: 13px; line-height: 16px; }
.history-text p { height: 16px; }
.indent { padding-left: 7px; }
.latin { font-family: "Liberation Mono", monospace; font-size: 12px; line-height: 12px; white-space: pre; }
.vscroll { display: grid; width: 17px; background: #f0f0f0; }
.vscroll button, .hscroll button { display: grid; place-items: center; }
.vscroll svg { width: 8px; height: 6px; }
.hscroll svg { width: 6px; height: 8px; }
.vscroll svg, .hscroll svg { fill: none; stroke: #505050; stroke-width: 2; }
.prompt { display: flex; height: 19px; padding-left: 1px; border-left: 1px solid #6a6a6a; background: #fff; }
.prompt label { color: #777; font-size: 7px; line-height: 10px; width: 22px; }
.caret { width: 2px; height: 9px; margin-top: 1px; background: #000; }
.prompt input { flex: 1; min-width: 0; padding: 0 4px; border: 0; outline: 0; background: transparent; font-size: 12px; }
.hscroll { display: grid; grid-template-columns: 16px 17px 20px 18px; margin-right: 30px; background: #f0f0f0; }
.hscroll button:last-child { grid-column: 4; }
.thumb { margin: 1px 0; background: #cdcdcd; }

/* Status bar */
.status { display: flex; flex: none; align-items: center; height: 29px; padding: 0 5px 0 4px; background: #f0f0f0; font-size: 21px; line-height: 24px; white-space: nowrap; }
.coords { width: 353px; margin-right: 4px; overflow: hidden; }
.toggle { flex: none; height: 26px; margin-right: 2px; padding: 0 7px 0 1px; border: 1px solid transparent; line-height: 24px; }
.toggle.on { border-color: #0078d7; background: #dceaf5; }
.toggle-wide { width: 56px; text-align: left; }
.feedback { margin-left: 2px; color: #00f; text-decoration: none; }
.brand { display: flex; align-items: center; gap: 5px; height: 24px; margin-left: auto; padding: 0 4px 0 2px; background: #fafafa; font-size: 13px; }
.brand svg { width: 18px; height: 16px; }
.brand-cad { color: #30385c; }
```
